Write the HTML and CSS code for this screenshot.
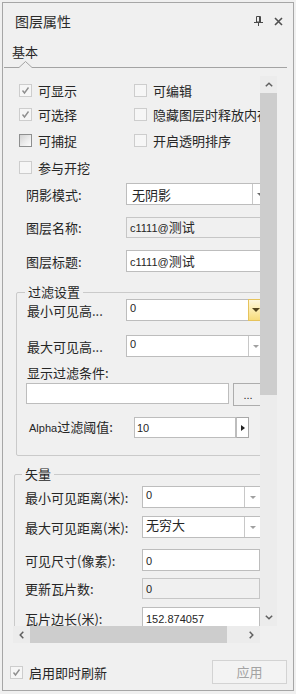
FILE: index.html
```html
<!DOCTYPE html>
<html lang="zh-CN">
<head>
<meta charset="utf-8">
<title>图层属性</title>
<link rel="stylesheet" href="styles.css">
</head>
<body>
<div class="panel">
  <div class="titlebar">
    <span class="title">图层属性</span>
    <svg class="pin" width="9" height="10" viewBox="0 0 9 10"><path d="M2.5 0.5h4v5.5h-4z" fill="none" stroke="#4a4a4a"/><path d="M5.5 0.5v5.5" stroke="#4a4a4a"/><path d="M0 6.5h9" stroke="#4a4a4a"/><path d="M4.5 7v3" stroke="#4a4a4a"/></svg>
    <svg class="close" width="9" height="9" viewBox="0 0 9 9"><path d="M1 1l7 7M8 1l-7 7" stroke="#505050" stroke-width="1.6"/></svg>
  </div>

  <div class="tabs">
    <span class="tab">基本</span>
    <svg class="tabline" width="283" height="7" viewBox="0 0 283 7"><polyline points="0,6.5 15,6.5 21.5,0.5 28,6.5 283,6.5" fill="none" stroke="#a3a3a3"/></svg>
  </div>

  <div class="scroll">
    <div class="viewport">
      <div class="content">
        <div class="checks">
          <div class="cb"><span class="box dis"><svg width="9" height="9" viewBox="0 0 9 9"><polyline points="1.5,4.5 3.5,7 7.5,1.5" fill="none" stroke="#8f8f8f" stroke-width="1.4"/></svg></span>可显示</div>
          <div class="cb"><span class="box dis"></span>可编辑</div>
          <div class="cb"><span class="box dis"><svg width="9" height="9" viewBox="0 0 9 9"><polyline points="1.5,4.5 3.5,7 7.5,1.5" fill="none" stroke="#8f8f8f" stroke-width="1.4"/></svg></span>可选择</div>
          <div class="cb"><span class="box dis"></span>隐藏图层时释放内存</div>
          <div class="cb"><span class="box on"></span>可捕捉</div>
          <div class="cb"><span class="box dis"></span>开启透明排序</div>
          <div class="cb"><span class="box dis"></span>参与开挖</div>
        </div>

        <div class="basic">
          <div class="frow h22 mt2"><span class="lbl">阴影模式:</span>
            <div class="ctl w-shadow"><span class="val pl5">无阴影</span><span class="dd"><i class="tri"></i></span></div>
          </div>
          <div class="frow h21 mt12"><span class="lbl">图层名称:</span>
            <div class="ctl ro w-name"><span class="val"><span class="en">c1111@</span>测试</span></div>
          </div>
          <div class="frow h22 mt12"><span class="lbl">图层标题:</span>
            <div class="ctl w-name"><span class="val"><span class="en">c1111@</span>测试</span></div>
          </div>
        </div>

        <fieldset class="group filter">
          <legend>过滤设置</legend>
          <div class="frow h22"><span class="lbl">最小可见高...</span>
            <div class="ctl edit w-minh"><span class="val"><span class="en">0</span></span><span class="dd hot"><i class="tri dark"></i></span></div>
          </div>
          <div class="frow h22 mt14"><span class="lbl">最大可见高...</span>
            <div class="ctl edit w-minh"><span class="val"><span class="en">0</span></span><span class="dd"><i class="tri light"></i></span></div>
          </div>
          <div class="frow h20 mt5"><span class="lbl">显示过滤条件:</span></div>
          <div class="cond mt1">
            <div class="ctl w-cond"></div>
            <div class="dots">...</div>
          </div>
          <div class="frow h21 mt11"><span class="lbl alpha"><span class="en">Alpha</span>过滤阈值:</span>
            <div class="ctl w-alpha"><span class="val pl2"><span class="en">10</span></span></div>
            <div class="spin"><i class="rtri"></i></div>
          </div>
        </fieldset>

        <fieldset class="group vector">
          <legend>矢量</legend>
          <div class="frow h22 mt5"><span class="lbl">最小可见距离(米):</span>
            <div class="ctl edit w-vec"><span class="val"><span class="en">0</span></span><span class="dd wide"><i class="tri light"></i></span></div>
          </div>
          <div class="frow h22 mt8"><span class="lbl">最大可见距离(米):</span>
            <div class="ctl edit w-vec"><span class="val">无穷大</span><span class="dd wide"><i class="tri light"></i></span></div>
          </div>
          <div class="frow h22 mt11"><span class="lbl">可见尺寸(像素):</span>
            <div class="ctl w-vtxt"><span class="val"><span class="en">0</span></span></div>
          </div>
          <div class="frow h21 mt7"><span class="lbl">更新瓦片数:</span>
            <div class="ctl ro w-vtxt"><span class="val"><span class="en">0</span></span></div>
          </div>
          <div class="frow h22 mt8"><span class="lbl">瓦片边长(米):</span>
            <div class="ctl w-vtxt"><span class="val"><span class="en">152.874057</span></span></div>
          </div>
        </fieldset>
      </div>
    </div>

    <div class="vbar">
      <div class="sbtn"><svg width="8" height="5" viewBox="0 0 8 5"><polyline points="0.8,4.3 4,1.2 7.2,4.3" fill="none" stroke="#606060" stroke-width="1.5"/></svg></div>
      <div class="vthumb"></div>
      <div class="track"></div>
      <div class="sbtn"><svg width="8" height="5" viewBox="0 0 8 5"><polyline points="0.8,0.7 4,3.8 7.2,0.7" fill="none" stroke="#606060" stroke-width="1.5"/></svg></div>
    </div>
    <div class="hbar">
      <div class="sbtn"><svg width="5" height="8" viewBox="0 0 5 8"><polyline points="4.3,0.8 1.2,4 4.3,7.2" fill="none" stroke="#606060" stroke-width="1.5"/></svg></div>
      <div class="hthumb"></div>
      <div class="track"></div>
      <div class="sbtn"><svg width="5" height="8" viewBox="0 0 5 8"><polyline points="0.7,0.8 3.8,4 0.7,7.2" fill="none" stroke="#606060" stroke-width="1.5"/></svg></div>
    </div>
    <div class="corner"></div>
  </div>

  <div class="footer">
    <div class="cb"><span class="box dis"><svg width="9" height="9" viewBox="0 0 9 9"><polyline points="1.5,4.5 3.5,7 7.5,1.5" fill="none" stroke="#8f8f8f" stroke-width="1.4"/></svg></span>启用即时刷新</div>
    <div class="apply">应用</div>
  </div>
</div>
</body>
</html>
```

FILE: styles.css
```css
* { box-sizing: border-box; }
html, body { margin: 0; padding: 0; }
body {
  width: 296px;
  height: 694px;
  overflow: hidden;
  background: #f0f0f0;
  font-family: "Noto Sans CJK SC", "Noto Sans", sans-serif;
  font-size: 13px;
  line-height: 19px;
  color: #262626;
}
.en { font-family: "Liberation Sans", Arial, sans-serif; font-size: 11px; }

.panel {
  margin: 2px 0 0 2px;
  width: 292px;
  height: 689px;
  border: 1px solid #a6a6a6;
  background: #f0f0f0;
  display: flex;
  flex-direction: column;
}

/* title */
.titlebar {
  flex: none;
  height: 36px;
  display: flex;
  align-items: center;
  padding: 0 10px 0 12px;
}
.title { flex: 1; font-size: 14px; line-height: 20px; color: #2a2a2a; }
.pin { flex: none; }
.close { flex: none; margin-left: 11px; }

/* tab */
.tabs { flex: none; padding-top: 3px; }
.tab { display: block; padding-left: 9px; line-height: 19px; }
.tabline { display: block; margin-left: 1px; }

/* scroll region */
.scroll {
  flex: none;
  margin: 8px 0 0 10px;
  width: 264px;
  display: grid;
  grid-template-columns: 247px 17px;
  grid-template-rows: 550px 17px;
}
.viewport { overflow: hidden; }
.content { width: 300px; }

.vbar { display: flex; flex-direction: column; background: #ececec; }
.hbar { display: flex; background: #ececec; }
.corner { background: #f0f0f0; }
.sbtn { flex: none; width: 17px; height: 17px; display: flex; align-items: center; justify-content: center; }
.vthumb { flex: none; height: 302px; background: #cdcdcd; }
.hthumb { flex: none; width: 197px; background: #cdcdcd; }
.track { flex: 1; }

/* checkboxes */
.checks {
  display: grid;
  grid-template-columns: 115px auto;
  grid-template-rows: 24px 25px 26px 28px;
  margin-top: 2px;
  padding-left: 6px;
}
.cb { display: flex; align-items: center; gap: 6px; white-space: nowrap; }
.box {
  flex: none;
  width: 13px;
  height: 13px;
  border: 1px solid #cfcfcf;
  display: flex;
  align-items: center;
  justify-content: center;
}
.box.dis { border-color: #cdcdcd; background: #f6f6f6; }
.box.on { border-color: #8e8f8f; background: linear-gradient(135deg, #d3d3d3 0%, #ececec 55%, #fcfcfc 100%); }

/* form rows */
.frow { display: flex; align-items: center; white-space: nowrap; }
.lbl { flex: none; }
.h20 { height: 20px; }
.h21 { height: 21px; }
.h22 { height: 22px; }
.mt1 { margin-top: 1px; }
.mt2 { margin-top: 2px; }
.mt5 { margin-top: 5px; }
.mt7 { margin-top: 7px; }
.mt8 { margin-top: 8px; }
.mt11 { margin-top: 11px; }
.mt12 { margin-top: 12px; }
.mt14 { margin-top: 14px; }

.basic .lbl { width: 113px; padding-left: 13px; }

.ctl {
  flex: none;
  height: 100%;
  border: 1px solid #bdbdbd;
  background: #fff;
  display: flex;
  align-items: center;
  white-space: nowrap;
}
.ctl.ro { background: #f0f0f0; border-color: #c6c6c6; }
.ctl .val { flex: 1; padding-left: 3px; overflow: hidden; }
.ctl .val.pl5 { padding-left: 5px; }
.ctl .val.pl2 { padding-left: 2px; }
.ctl.edit .val { padding-bottom: 5px; }
.dd {
  flex: none;
  width: 15px;
  align-self: stretch;
  border-left: 1px solid #c8c8c8;
  display: flex;
  align-items: center;
  justify-content: center;
}
.dd.wide { width: 17px; }
.dd.hot {
  border: 1px solid #e6c35c;
  margin: -1px -1px -1px 0;
  width: 16px;
  background: linear-gradient(#fdf7dd 0%, #fbeaa8 55%, #f7dc7c 100%);
}
.tri {
  width: 0;
  height: 0;
  border-left: 3px solid transparent;
  border-right: 3px solid transparent;
  border-top: 3px solid #6a6a6a;
}
.tri.light { border-top-color: #a0a0a0; }
.tri.dark { border-top-color: #54451c; border-left-width: 4px; border-right-width: 4px; border-top-width: 4px; }

.w-shadow { width: 142px; }
.w-name { width: 140px; }
.w-minh { width: 138px; }
.w-cond { width: 203px; }
.w-alpha { width: 102px; }
.w-vec { width: 120px; }
.w-vtxt { width: 118px; }

/* group boxes */
.group {
  margin: 0;
  padding: 0;
  border: 1px solid #cacaca;
  border-radius: 2px;
  min-width: 0;
}
.group legend {
  padding: 0 3px;
  line-height: 14px;
  height: 14px;
}
.filter { margin: 13px 0 0 3px; width: 290px; padding-bottom: 17px; }
.filter legend { margin-left: 8px; }
.filter .lbl { width: 109px; padding-left: 10px; }
.filter .lbl.alpha { width: 117px; padding-left: 12px; }

.cond { display: flex; align-items: flex-start; gap: 4px; padding-left: 9px; }
.cond .ctl { height: 21px; }
.dots {
  flex: none;
  width: 30px;
  height: 23px;
  border: 1px solid #adadad;
  background: #f0f0f0;
  text-align: center;
  line-height: 23px;
  font-family: "Liberation Sans", Arial, sans-serif;
  font-size: 11px;
}
.spin {
  flex: none;
  width: 13px;
  height: 100%;
  border: 1px solid #a8a8a8;
  border-left-color: #bdbdbd;
  background: #fff;
  display: flex;
  align-items: center;
  justify-content: center;
}
.rtri {
  width: 0;
  height: 0;
  border-top: 3px solid transparent;
  border-bottom: 3px solid transparent;
  border-left: 4px solid #222;
}

.vector { margin: 11px 0 0 1px; width: 292px; }
.vector legend { margin-left: 7px; }
.vector .lbl { width: 127px; padding-left: 10px; }

/* footer */
.footer {
  flex: 1;
  display: flex;
  align-items: center;
  justify-content: space-between;
  padding: 10px 6px 0 7px;
}
.footer .cb { margin-top: 2px; }
.apply {
  width: 75px;
  height: 24px;
  border: 1px solid #d3d3d3;
  background: #f3f3f3;
  color: #a3a3a3;
  text-align: center;
  line-height: 22px;
}
```
